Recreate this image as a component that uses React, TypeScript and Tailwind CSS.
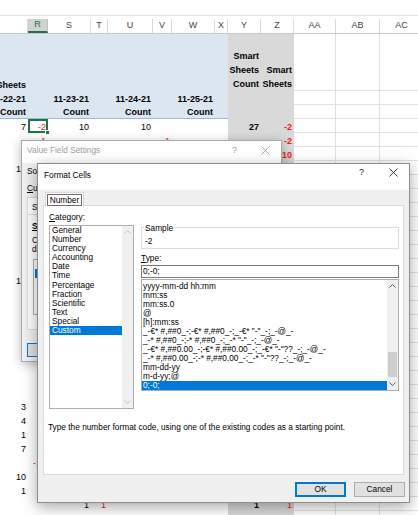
import React from 'react';

const font = "font-['Liberation_Sans',Arial,sans-serif]";

type Col = { key: string; label: string; w: string };

const cols: Col[] = [
  { key: 'Q', label: '', w: 'w-[28px]' },
  { key: 'R', label: 'R', w: 'w-[20px]' },
  { key: 'S', label: 'S', w: 'w-[43px]' },
  { key: 'T', label: 'T', w: 'w-[17px]' },
  { key: 'U', label: 'U', w: 'w-[45px]' },
  { key: 'V', label: 'V', w: 'w-[19px]' },
  { key: 'W', label: 'W', w: 'w-[43px]' },
  { key: 'X', label: 'X', w: 'w-[13px]' },
  { key: 'Y', label: 'Y', w: 'w-[33px]' },
  { key: 'Z', label: 'Z', w: 'w-[33px]' },
  { key: 'AA', label: 'AA', w: 'w-[42px]' },
  { key: 'AB', label: 'AB', w: 'w-[44px]' },
  { key: 'AC', label: 'AC', w: 'w-[44px]' },
];

type Cell = { t: React.ReactNode; red?: boolean; bold?: boolean; multi?: boolean };

// row index: 0-2 pivot header, 3+ data rows
const cells: Record<string, Cell> = {
  '0:Q': { t: 'Sheets', bold: true },
  '0:Y': { t: <>Smart<br />Sheets<br />Count</>, bold: true, multi: true },
  '0:Z': { t: <>Smart<br />Sheets</>, bold: true, multi: true },
  '1:Q': { t: '11-22-21', bold: true },
  '1:S': { t: '11-23-21', bold: true },
  '1:U': { t: '11-24-21', bold: true },
  '1:W': { t: '11-25-21', bold: true },
  '2:Q': { t: 'Count', bold: true },
  '2:S': { t: 'Count', bold: true },
  '2:U': { t: 'Count', bold: true },
  '2:W': { t: 'Count', bold: true },
  '3:Q': { t: '7' },
  '3:R': { t: '-2', red: true },
  '3:S': { t: '10' },
  '3:U': { t: '10' },
  '3:Y': { t: '27', bold: true },
  '3:Z': { t: '-2', red: true, bold: true },
  '4:R': { t: '-1', red: true },
  '4:V': { t: '1', red: true },
  '4:Z': { t: '-2', red: true, bold: true },
  '5:Z': { t: '10', red: true, bold: true },
  '6:Q': { t: '12' },
  '14:Q': { t: '10' },
  '23:Q': { t: '3' },
  '24:Q': { t: '4' },
  '25:Q': { t: '1' },
  '26:Q': { t: '7' },
  '27:R': { t: '-10', red: true },
  '28:Q': { t: '10' },
  '28:R': { t: '-1', red: true },
  '29:Q': { t: '1' },
  '30:S': { t: '1' },
  '30:T': { t: '1', red: true },
  '30:Y': { t: '1', bold: true },
  '30:Z': { t: '1', red: true },
};

const rowHeights = ['h-[57px]', ...Array(31).fill('h-[14px]')];

const categories = ['General', 'Number', 'Currency', 'Accounting', 'Date', 'Time', 'Percentage', 'Fraction', 'Scientific', 'Text', 'Special', 'Custom'];

const types = [
  'yyyy-mm-dd hh:mm',
  'mm:ss',
  'mm:ss.0',
  '@',
  '[h]:mm:ss',
  '_-€* #,##0_-;-€* #,##0_-;_-€* "-"_-;_-@_-',
  '_-* #,##0_-;-* #,##0_-;_-* "-"_-;_-@_-',
  '_-€* #,##0.00_-;-€* #,##0.00_-;_-€* "-"??_-;_-@_-',
  '_-* #,##0.00_-;-* #,##0.00_-;_-* "-"??_-;_-@_-',
  'mm-dd-yy',
  'm-d-yy;@',
  '0;-0;',
];

const Chevron = ({ up, className = '' }: { up?: boolean; className?: string }) => (
  <svg width="7" height="4" viewBox="0 0 7 4" className={className}>
    <path d={up ? 'M0.5 3.5L3.5 0.5L6.5 3.5' : 'M0.5 0.5L3.5 3.5L6.5 0.5'} fill="none" stroke="currentColor" strokeWidth="1" />
  </svg>
);

const CloseX = ({ className = '' }: { className?: string }) => (
  <svg width="9" height="9" viewBox="0 0 9 9" className={className}>
    <path d="M0.5 0.5L8.5 8.5M8.5 0.5L0.5 8.5" stroke="currentColor" strokeWidth="0.9" fill="none" />
  </svg>
);

function ScrollBar({ thumb, dim }: { thumb?: boolean; dim?: boolean }) {
  const arrow = dim ? 'text-[#c2c2c2]' : 'text-[#606060]';
  return (
    <div className="w-[11px] shrink-0 bg-[#f0f0f0] flex flex-col">
      <div className={`h-[12px] flex items-center justify-center ${arrow}`}>
        <Chevron up />
      </div>
      <div className="flex-1 flex flex-col justify-end px-[1px] pb-[1px]">
        {thumb && <div className="h-[25px] bg-[#cdcdcd]" />}
      </div>
      <div className={`h-[12px] flex items-center justify-center ${arrow}`}>
        <Chevron />
      </div>
    </div>
  );
}

function cellClass(r: number, c: number) {
  if (c === 8 || c === 9) return 'bg-[#d9d9d9]';
  if (c >= 10) return 'border-r border-b border-[#e1e1e1]';
  if (r === 2) return 'bg-[#dce6f1] border-b border-[#9fb8da]';
  if (r < 2) return 'bg-[#dce6f1]';
  return '';
}

function Sheet() {
  return (
    <div className="flex flex-col text-[9px] text-black">
      <div className="h-[16px] border-b border-[#e3e3e3]" />
      <div className="flex h-[18px] border-b border-[#c8c8c8]">
        {cols.map((c) => (
          <div key={c.key} className={`${c.w} shrink-0 flex items-end`}>
            {c.key === 'R' ? (
              <div className="w-full h-[14px] flex items-center justify-center bg-[#d2d2d2] text-[#1e6b41] border-r border-r-[#c0c0c0] border-b-2 border-b-[#217346]">
                {c.label}
              </div>
            ) : (
              <div className="w-full h-[14px] flex items-center justify-center border-r border-[#dadada] text-[#444]">
                {c.label}
              </div>
            )}
          </div>
        ))}
      </div>
      {rowHeights.map((h, r) => (
        <div key={r} className={`flex ${h}`}>
          {cols.map((c, ci) => {
            const cell = cells[`${r}:${c.key}`];
            return (
              <div key={c.key} className={`${c.w} relative shrink-0 flex items-end justify-end pr-[2px] ${cellClass(r, ci)}`}>
                {cell && (
                  <span
                    className={`whitespace-nowrap text-right ${cell.multi ? 'leading-[14px]' : 'leading-[12px]'} ${
                      cell.red ? 'text-[#ee1c1c]' : ''
                    } ${cell.bold ? 'font-bold' : ''}`}
                  >
                    {cell.t}
                  </span>
                )}
                {r === 3 && c.key === 'R' && (
                  <div className="absolute inset-0 border-2 border-[#217346]">
                    <div className="absolute right-[-4px] bottom-[-4px] w-[5px] h-[5px] bg-[#217346] border border-white" />
                  </div>
                )}
              </div>
            );
          })}
        </div>
      ))}
    </div>
  );
}

function ValueFieldSettings() {
  return (
    <div className="absolute left-[21px] top-[140px] w-[261px] h-[222px] flex flex-col overflow-hidden border border-[#aaaaaa] bg-[#f0f0f0] shadow-[0_2px_10px_rgba(0,0,0,0.28)] text-[8.3px] text-black">
      <div className="h-[22px] shrink-0 bg-white flex items-start pl-[5px] text-[#9d9d9d]">
        <span className="mt-[5px] flex-1 leading-[9px]">Value Field Settings</span>
        <span className="mt-[5px] mr-[24px] leading-[9px] text-[9px]">?</span>
        <CloseX className="mt-[5px] mr-[11px]" />
      </div>
      <div className="flex-1 flex flex-col px-[5px] whitespace-nowrap">
        <div className="mt-[4px] leading-[9px]">Source Name: Smart Sheets Count</div>
        <div className="mt-[6px] flex items-center gap-[6px]">
          <span className="leading-[9px]">
            <u>C</u>ustom Name:
          </span>
          <div className="flex-1 h-[13px] bg-white border border-[#7a7a7a]" />
        </div>
        <div className="mt-[2px] flex items-end">
          <div className="h-[17px] px-[4px] bg-white border border-[#d9d9d9] border-b-0 flex items-end pb-[2px] leading-[9px]">
            Summarize Values By
          </div>
          <div className="h-[15px] px-[4px] border border-[#d9d9d9] border-b-0 flex items-center leading-[9px]">Show Values As</div>
        </div>
        <div className="h-[116px] bg-white border border-[#d9d9d9] px-[4px] pt-[7px] flex flex-col">
          <div className="leading-[9px] font-bold">
            <u>S</u>ummarize value field by
          </div>
          <div className="mt-[5px] leading-[9px]">
            Choose the type of calculation that you want to use to summarize
            <br />
            data from selected field
          </div>
          <div className="mt-[5px] ml-px w-[200px] h-[56px] bg-white border border-[#adadad] pl-px">
            {['Sum', 'Count', 'Average', 'Max', 'Min', 'Product'].map((t) => (
              <div key={t} className={`h-[9px] leading-[9px] pl-[2px] ${t === 'Count' ? 'bg-[#0078d7] text-white' : ''}`}>
                {t}
              </div>
            ))}
          </div>
        </div>
        <div className="mt-[13px] w-[80px] h-[14px] bg-[#e1e1e1] border border-[#0078d7] flex items-center justify-center leading-[9px]">
          <u>N</u>umber Format
        </div>
      </div>
    </div>
  );
}

function FormatCells() {
  return (
    <div className="absolute left-[37px] top-[163px] w-[373px] h-[340px] flex flex-col border border-[#8c8c8c] bg-[#f0f0f0] shadow-[0_4px_14px_rgba(0,0,0,0.35)] text-[8.3px] text-black">
      <div className="h-[26px] shrink-0 bg-white flex items-start pl-[6px]">
        <span className="mt-[7px] flex-1 leading-[9px]">Format Cells</span>
        <span className="mt-[4px] mr-[25px] leading-[9px] text-[9px] text-[#222]">?</span>
        <CloseX className="mt-[4px] mr-[11px] text-[#222]" />
      </div>
      <div className="flex-1 flex flex-col px-[5px]">
        <div className="mt-[2px] ml-[2px] relative z-10 -mb-[2px] w-[39px] h-[15px] bg-white border border-[#d9d9d9] border-b-0 p-px">
          <div className="w-full h-[12px] border border-[#707070] flex items-center justify-center leading-[9px]">Number</div>
        </div>
        <div className="h-[270px] bg-white border border-[#d9d9d9] flex flex-col pl-[5px] pr-[4px] pt-[7px]">
          <div className="flex">
            <div className="w-[85px] shrink-0 flex flex-col">
              <div className="leading-[9px]">
                <u>C</u>ategory:
              </div>
              <div className="mt-[3px] h-[184px] border border-[#adadad] bg-white flex">
                <div className="flex-1 min-w-0">
                  {categories.map((c) => (
                    <div key={c} className={`h-[9.1px] leading-[9.1px] pl-[2px] ${c === 'Custom' ? 'bg-[#0078d7] text-white' : ''}`}>
                      {c}
                    </div>
                  ))}
                </div>
                <ScrollBar dim />
              </div>
            </div>
            <div className="ml-[7px] w-[258px] shrink-0 pt-[14px] flex flex-col">
              <div className="relative h-[22px] border border-[#dcdcdc] pl-[3px] pt-[9px]">
                <span className="absolute left-[2px] -top-[4px] bg-white px-px leading-[9px]">Sample</span>
                <div className="leading-[9px]">-2</div>
              </div>
              <div className="mt-[5px] leading-[9px]">
                <u>T</u>ype:
              </div>
              <div className="mt-[2px] h-[13px] border border-[#7a7a7a] bg-white pl-px leading-[11px]">0;-0;</div>
              <div className="mt-[1px] h-[112px] border border-[#adadad] bg-white flex">
                <div className="flex-1 min-w-0 pt-[2px] overflow-hidden">
                  {types.map((t, i) => (
                    <div
                      key={t}
                      className={`h-[9px] leading-[9px] pl-px whitespace-pre ${i === types.length - 1 ? 'bg-[#0078d7] text-white' : ''}`}
                    >
                      {t}
                    </div>
                  ))}
                </div>
                <ScrollBar thumb />
              </div>
            </div>
          </div>
          <div className="mt-[14px] -ml-px leading-[9px] whitespace-nowrap">
            Type the number format code, using one of the existing codes as a starting point.
          </div>
        </div>
        <div className="mt-[7px] -mr-px flex justify-end gap-[8px]">
          <div className="w-[51px] h-[15px] bg-[#e1e1e1] border border-[#0078d7] shadow-[inset_0_0_0_1px_#0078d7] flex items-center justify-center leading-[9px]">
            OK
          </div>
          <div className="w-[51px] h-[15px] bg-[#e1e1e1] border border-[#adadad] flex items-center justify-center leading-[9px]">
            Cancel
          </div>
        </div>
      </div>
    </div>
  );
}

export default function App() {
  return (
    <div className={`relative w-[418px] h-[515px] overflow-hidden bg-white ${font}`}>
      <Sheet />
      <ValueFieldSettings />
      <FormatCells />
    </div>
  );
}
